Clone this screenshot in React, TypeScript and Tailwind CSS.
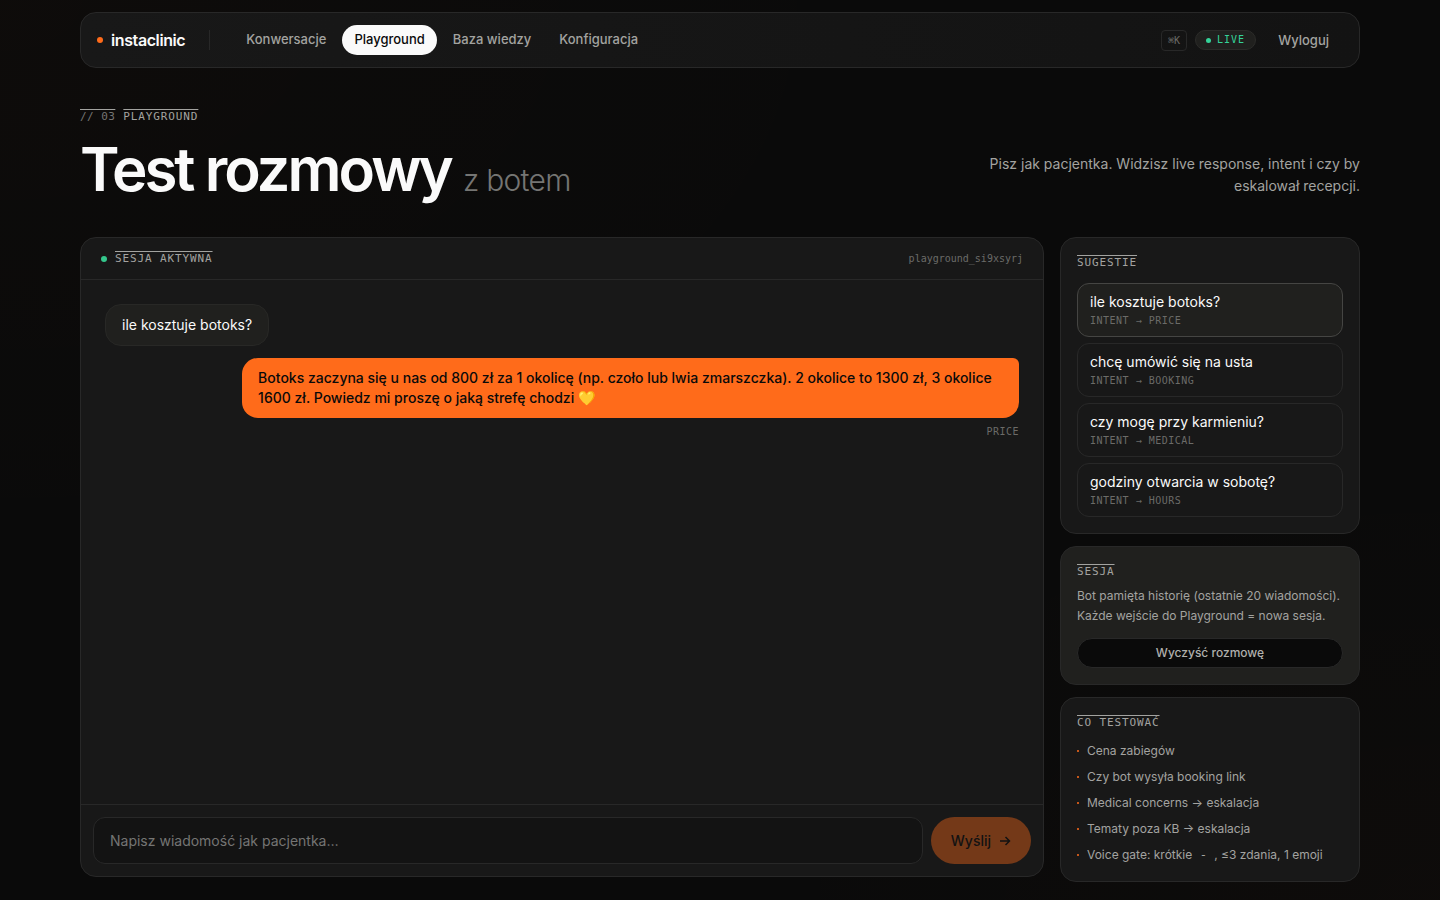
import type { ReactNode } from "react";

interface Suggestion {
  text: string;
  intent: string;
  active?: boolean;
}

const NAV = ["Konwersacje", "Playground", "Baza wiedzy", "Konfiguracja"];

const SUGGESTIONS: Suggestion[] = [
  { text: "ile kosztuje botoks?", intent: "PRICE", active: true },
  { text: "chcę umówić się na usta", intent: "BOOKING" },
  { text: "czy mogę przy karmieniu?", intent: "MEDICAL" },
  { text: "godziny otwarcia w sobotę?", intent: "HOURS" },
];

const CHECKLIST: ReactNode[] = [
  "Cena zabiegów",
  "Czy bot wysyła booking link",
  "Medical concerns → eskalacja",
  "Tematy poza KB → eskalacja",
  <>
    Voice gate: krótkie <code className="px-1 font-['DejaVu_Sans_Mono',monospace]">-</code> , ≤3 zdania, 1 emoji
  </>,
];

function Label({ children }: { children: ReactNode }) {
  return (
    <h2 className="w-fit font-['DejaVu_Sans_Mono',monospace] text-[11px] leading-[17px] tracking-[0.08em] text-[#a3a3a0] uppercase overline">
      {children}
    </h2>
  );
}

function Card({ raised = false, children }: { raised?: boolean; children: ReactNode }) {
  return (
    <section
      className={`rounded-2xl border border-[#282828] p-4 ${raised ? "bg-[#20201e]" : "bg-[#181818]"}`}
    >
      {children}
    </section>
  );
}

function TopBar() {
  return (
    <header className="flex h-14 items-center rounded-2xl border border-[#282828] bg-linear-to-r from-[#181818] to-[#131313] px-4">
      <a href="#" className="flex items-center gap-2 text-base font-semibold tracking-tight text-[#fafafa]">
        <span className="size-1.5 rounded-full bg-[#ff6b1a]" />
        instaclinic
      </a>
      <span className="mx-6 h-5 w-px bg-[#282828]" />
      <nav className="flex items-center gap-1 text-[13px] leading-5 font-medium">
        {NAV.map((item) => (
          <a
            key={item}
            href="#"
            className={`rounded-full px-3 pt-1 pb-1.5 ${
              item === "Playground" ? "bg-[#fafafa] text-[#0a0a0a]" : "text-[#a3a3a0]"
            }`}
          >
            {item}
          </a>
        ))}
      </nav>
      <div className="ml-auto flex items-center gap-2">
        <kbd className="rounded border border-[#282828] px-1.5 font-['DejaVu_Sans_Mono',monospace] text-[10px] leading-[19px] text-[#6b6b68]">
          ⌘K
        </kbd>
        <span className="flex items-center gap-1.5 rounded-full border border-[#2b2b29] bg-[#20201e] px-2.5 font-['DejaVu_Sans_Mono',monospace] text-[10px] leading-[18px] tracking-widest text-[#34d399]">
          <span className="size-[5px] rounded-full bg-[#34d399]" />
          LIVE
        </span>
        <button type="button" className="px-3.5 py-1 text-[13px] leading-5 font-medium text-[#a3a3a0]">
          Wyloguj
        </button>
      </div>
    </header>
  );
}

function Chat() {
  return (
    <section className="flex min-h-160 min-w-0 flex-1 flex-col self-start rounded-2xl border border-[#282828] bg-[#181818]">
      <div className="flex h-[42px] items-center justify-between border-b border-[#282828] px-5">
        <div className="flex items-center gap-2">
          <span className="size-1.5 rounded-full bg-[#34c78c]" />
          <Label>Sesja aktywna</Label>
        </div>
        <span className="font-['DejaVu_Sans_Mono',monospace] text-[10px] text-[#6b6b68]">playground_si9xsyrj</span>
      </div>

      <div className="flex flex-1 flex-col gap-3 p-6 text-sm leading-5">
        <p className="self-start rounded-2xl border border-[#282826] bg-[#20201e] px-4 py-2.5 text-[#fafafa]">
          ile kosztuje botoks?
        </p>
        <div className="flex max-w-[85%] flex-col items-end gap-2 self-end">
          <p className="rounded-2xl rounded-tr-md bg-[#ff6b1a] px-4 py-2.5 font-medium text-[#0a0a0a]">
            Botoks zaczyna się u nas od 800 zł za 1 okolicę (np. czoło lub lwia zmarszczka). 2 okolice to 1300 zł, 3
            okolice 1600 zł. Powiedz mi proszę o jaką strefę chodzi 💛
          </p>
          <span className="font-['DejaVu_Sans_Mono',monospace] text-[10px] leading-3 tracking-wider text-[#6b6b68]">
            PRICE
          </span>
        </div>
      </div>

      <form className="flex gap-2 border-t border-[#282828] p-3" onSubmit={(e) => e.preventDefault()}>
        <input
          type="text"
          aria-label="Wiadomość"
          placeholder="Napisz wiadomość jak pacjentka…"
          className="h-[47px] min-w-0 flex-1 rounded-xl border border-[#282828] bg-[#131313] px-4 text-sm text-[#fafafa] outline-none placeholder:text-[#757573]"
        />
        <button
          type="submit"
          disabled
          className="flex items-center gap-2 rounded-full bg-[#ff6b1a] px-5 text-sm font-medium text-[#0a0a0a] opacity-40"
        >
          Wyślij
          <svg viewBox="0 0 12 12" className="size-3" fill="none" stroke="currentColor" strokeWidth="1.5">
            <path d="M1 6h9.5M6.5 2l4 4-4 4" />
          </svg>
        </button>
      </form>
    </section>
  );
}

function Sidebar() {
  return (
    <aside className="flex w-75 shrink-0 flex-col gap-3">
      <Card>
        <Label>Sugestie</Label>
        <div className="mt-3 flex flex-col gap-1.5">
          {SUGGESTIONS.map((s) => (
            <button
              key={s.intent}
              type="button"
              className={`flex flex-col gap-0.5 rounded-xl border px-3 py-2 text-left ${
                s.active ? "border-[#454543] bg-[#20201e]" : "border-[#282828]"
              }`}
            >
              <span className="text-sm leading-5 text-[#fafafa]">{s.text}</span>
              <span className="font-['DejaVu_Sans_Mono',monospace] text-[10px] leading-[14px] tracking-wider text-[#6b6b68]">
                INTENT → {s.intent}
              </span>
            </button>
          ))}
        </div>
      </Card>

      <Card raised>
        <Label>Sesja</Label>
        <p className="mt-1.5 text-xs leading-5 text-[#a3a3a0]">
          Bot pamięta historię (ostatnie 20 wiadomości). Każde wejście do Playground = nowa sesja.
        </p>
        <button
          type="button"
          className="mt-3 h-[30px] w-full rounded-full border border-[#282828] bg-[#0a0a0a] text-xs font-medium text-[#b0b0ad]"
        >
          Wyczyść rozmowę
        </button>
      </Card>

      <Card>
        <Label>Co testować</Label>
        <ul className="mt-2.5 flex flex-col gap-1.5 text-xs leading-5 text-[#a3a3a0]">
          {CHECKLIST.map((item, i) => (
            <li key={i} className="flex items-center gap-2">
              <span className="size-0.5 bg-[#c4561a]" />
              <span>{item}</span>
            </li>
          ))}
        </ul>
      </Card>
    </aside>
  );
}

export default function App() {
  return (
    <div className="min-h-screen bg-[#0a0a0a] bg-[radial-gradient(ellipse_at_top_left,#ff6b1a04,transparent_45%),radial-gradient(ellipse_at_bottom_right,#ff6b1a04,transparent_35%)] px-6 pt-3 pb-4 font-[Inter,'Noto_Sans',sans-serif] antialiased">
      <div className="mx-auto max-w-7xl">
        <TopBar />
        <main className="pt-10">
          <div className="flex items-center gap-2">
            <span className="font-['DejaVu_Sans_Mono',monospace] text-[11px] leading-[17px] tracking-[0.04em] text-[#757573] decoration-[#a3a3a0] overline">
              // 03
            </span>
            <Label>Playground</Label>
          </div>
          <div className="mt-4 flex items-end justify-between gap-8">
            <h1 className="text-6xl leading-[56px] font-semibold tracking-tighter text-[#fafafa]">
              Test rozmowy{" "}
              <span className="text-3xl leading-none font-light tracking-tight text-[#757573]">z botem</span>
            </h1>
            <p className="max-w-95 text-right text-sm leading-[22px] text-[#a3a3a0]">
              Pisz jak pacjentka. Widzisz live response, intent i czy by eskalował recepcji.
            </p>
          </div>
          <div className="mt-10 flex gap-4">
            <Chat />
            <Sidebar />
          </div>
        </main>
      </div>
    </div>
  );
}
